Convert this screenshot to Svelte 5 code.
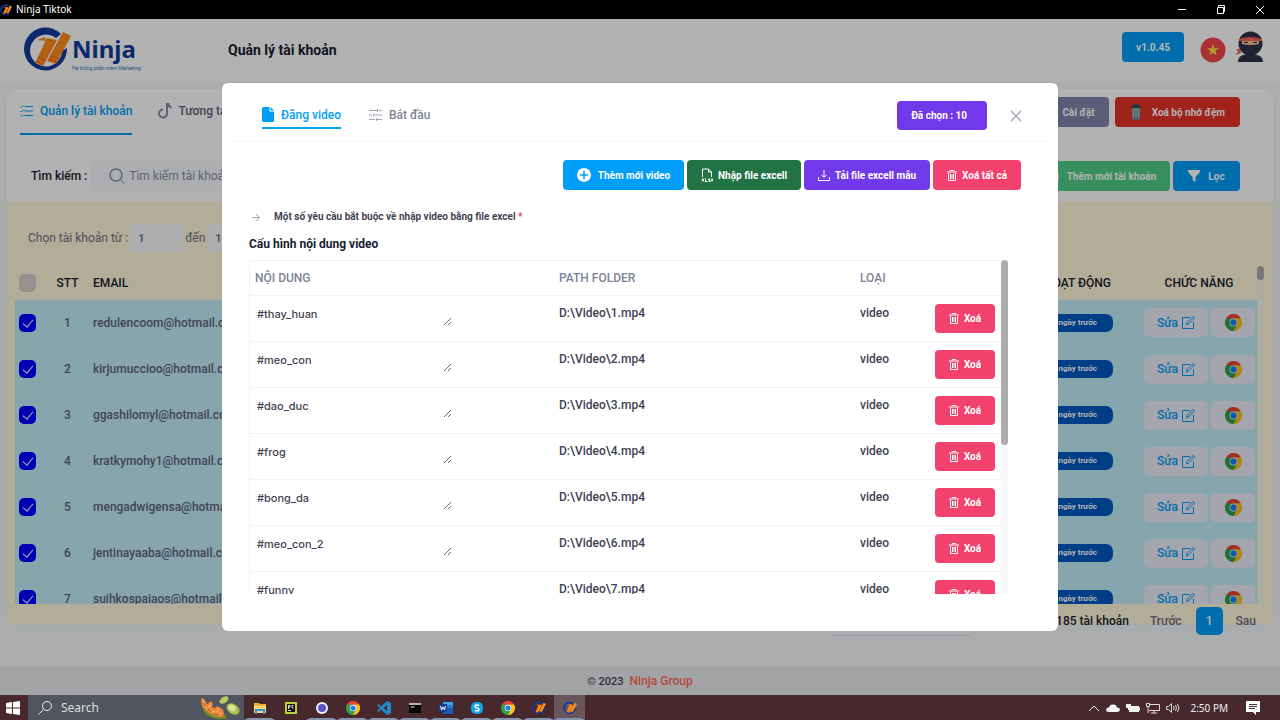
<script>
    let email = $state("");
    let fromAccount = $state("1");
    let toAccount = $state("10");
    let allSelected = $state(false);

    let accounts = $state([
        {email: "redulencoom@hotmail.com", checked: true},
        {email: "kirjumuccioo@hotmail.com", checked: true},
        {email: "ggashilomyl@hotmail.com", checked: true},
        {email: "kratkymohy1@hotmail.com", checked: true},
        {email: "mengadwigensa@hotmail.com", checked: true},
        {email: "jentinayaaba@hotmail.com", checked: true},
        {email: "suihkospaiaos@hotmail.com", checked: true},
    ]);

    let videos = $state([
        {content: "#thay_huan", path: "D:\\Video\\1.mp4"},
        {content: "#meo_con", path: "D:\\Video\\2.mp4"},
        {content: "#dao_duc", path: "D:\\Video\\3.mp4"},
        {content: "#frog", path: "D:\\Video\\4.mp4"},
        {content: "#bong_da", path: "D:\\Video\\5.mp4"},
        {content: "#meo_con_2", path: "D:\\Video\\6.mp4"},
        {content: "#funny", path: "D:\\Video\\7.mp4"},
    ]);

    const apps = [
        {name: "explorer", running: true},
        {name: "pycharm", running: false},
        {name: "browser", running: true},
        {name: "chrome", running: true},
        {name: "vscode", running: true},
        {name: "terminal", running: true},
        {name: "word", running: true},
        {name: "skype", running: true},
        {name: "chrome", running: true},
        {name: "ninja", running: true},
        {name: "ninja", running: true, active: true},
    ];

    function removeVideo(index) {
        videos.splice(index, 1);
    }

    function removeAll() {
        videos = [];
    }

    function toggleAll() {
        accounts.forEach((account) => (account.checked = allSelected));
    }
</script>

{#snippet ninjaMark(size)}
    <svg width={size} height={size} viewBox="0 0 48 44" aria-hidden="true">
        <path d="M38 6A21.500 21.500 0 1 0 44 20L39 23A16 16 0 1 1 33 10Z" fill="#123a9c" />
        <path d="M24 10 34 12 20 38 12 35Z" fill="#ff8c1a" />
        <path d="M40 4 48 8 33 36 24 33Z" fill="#ff8c1a" />
        <path d="M14 12l8-3 1 4z" fill="#ff8c1a" />
        <path d="M14 33l7 3M16 30l7 3M26 31l8 3M28 28l8 3" stroke="#e8402a" stroke-dasharray="1 1" />
    </svg>
{/snippet}

{#snippet chrome(size)}
    <svg width={size} height={size} viewBox="0 0 48 48" aria-hidden="true">
        <path d="M24 24 3.200 12A24 24 0 0 1 44.800 12Z" fill="#ea4335" />
        <path d="M24 24 44.800 12A24 24 0 0 1 24 48Z" fill="#fbc116" />
        <path d="M24 24 24 48A24 24 0 0 1 3.200 12Z" fill="#34a049" />
        <path d="M24 12H44.800L34 30Z" fill="#fbc116" />
        <path d="M34 30 24 48 14 30Z" fill="#34a049" />
        <path d="M3.200 12 14 30 24 12Z" fill="#34a049" />
        <path d="M3.200 12H44.800L24 13Z" fill="#ea4335" />
        <circle cx="24" cy="24" r="11" fill="#fff" />
        <circle cx="24" cy="24" r="9" fill="#1a82f0" />
    </svg>
{/snippet}

{#snippet trash()}
    <svg width="10" height="11" viewBox="0 0 10 11" aria-hidden="true">
        <path d="M3 1.500V.5h4v1M0 2h10M1.500 3v7.500h7V3M3.500 4v5M5 4v5M6.500 4v5" fill="none" stroke="#fff" />
    </svg>
{/snippet}

<div class="window">
    <header class="titlebar">
        {@render ninjaMark(12)}
        <span class="title">Ninja Tiktok</span>
        <button aria-label="Minimize"><svg width="10" height="10"><path d="M1 4.500h8" stroke="#fff" /></svg></button>
        <button aria-label="Restore"><svg width="10" height="10"><path d="M1.500 2.500h6v6h-6zM2.500 2V.5h6v6H8" fill="none" stroke="#fff" /></svg></button>
        <button aria-label="Close"><svg width="10" height="10"><path d="M1 1l8 8M9 1l-8 8" stroke="#fff" /></svg></button>
    </header>

    <div class="screen">
        <div class="page">
            <div class="header">
                <div class="logo">
                    {@render ninjaMark(48)}
                    <div class="logo-text">
                        <b>Ninja</b>
                        <small>Hệ thống phần mềm Marketing</small>
                    </div>
                </div>
                <h1>Quản lý tài khoản</h1>
                <button class="btn blue version">v1.0.45</button>
                <svg class="flag" width="26" height="26" viewBox="0 0 26 26" aria-label="Tiếng Việt">
                    <circle cx="13" cy="13" r="12.500" fill="#f2464b" />
                    <path d="M13 7l1.500 4.300h4.500l-3.600 2.700 1.300 4.500-3.700-2.700-3.700 2.700 1.300-4.500L7 11.300h4.500z" fill="#ffd93b" />
                </svg>
                <svg class="avatar" width="28" height="32" viewBox="0 0 28 32" aria-label="Avatar">
                    <path d="M2 31c0-6 5-8 12-8s13 2 13 8z" fill="#2f3148" />
                    <ellipse cx="14.500" cy="12.500" rx="12" ry="12" fill="#2f3148" />
                    <path d="M3 8q11-4 23 0v2H3z" fill="#ef6450" />
                    <path d="M6 10h17v3q-8 2-17 0z" fill="#f5c5a3" />
                    <path d="M8 11.500h4M17 11.500h4" stroke="#222" />
                    <path d="M4 17l-4 2 2 1-2 4 5-2z" fill="#ef6450" />
                </svg>
            </div>

            <div class="content">
                <section class="card">
                    <div class="tabs-row">
                        <button class="tab active">
                            <svg width="14" height="12" viewBox="0 0 14 12"><path d="M4.500 1.500H13M4.500 6H13M4.500 10.500H13M.5 1.500l1 1 2-2M.5 6l1 1 2-2M.5 10.500l1 1 2-2" fill="none" stroke="#009ef7" /></svg>
                            Quản lý tài khoản
                        </button>
                        <button class="tab">
                            <svg width="14" height="16" viewBox="0 0 14 16"><path d="M5 6.500A4 4 0 1 0 9 11V1h1.500q.5 3 3 3.500" fill="none" stroke="#8a8fa5" stroke-width="2" /></svg>
                            Tương tác
                        </button>
                        <div class="spacer"></div>
                        <button class="btn slate">Cài đặt</button>
                        <button class="btn red">
                            <svg width="12" height="16" viewBox="0 0 12 16"><path d="M1.500 4h9l-.5 11.500H2z" fill="#6f8c99" /><path d="M3.500 5.500v8M6 5.500v8M8.500 5.500v8" stroke="#b7ccd2" /><path d="M1 3h10M4 1h4" stroke="#39505c" stroke-width="2" /><path d="M3 5h6" stroke="#7bd08a" /></svg>
                            Xoá bộ nhớ đệm
                        </button>
                    </div>

                    <div class="search-row">
                        <label for="search">Tìm kiếm :</label>
                        <div class="search-box">
                            <svg width="16" height="16" viewBox="0 0 16 16"><circle cx="7" cy="7" r="6" fill="none" stroke="#8a8fa5" stroke-width="1.500" /><path d="M11.500 11.500l4 4" stroke="#b4b8c8" stroke-width="1.500" /></svg>
                            <input id="search" placeholder="Tìm kiếm tài khoản" bind:value={email} />
                        </div>
                        <div class="spacer"></div>
                        <button class="btn green">
                            <svg width="14" height="14" viewBox="0 0 14 14"><circle cx="7" cy="7" r="7" fill="#fff" /><path d="M3 7h8M7 3v8" stroke="#50cd89" stroke-width="2" /></svg>
                            Thêm mới tài khoản
                        </button>
                        <button class="btn blue filter">
                            <svg width="12" height="12" viewBox="0 0 12 12"><path d="M0 0h12v2L7.500 7v5l-3-2V7L0 2z" fill="#fff" /></svg>
                            Lọc
                        </button>
                    </div>

                    <div class="accounts">
                        <div class="range">
                            <label for="from">Chọn tài khoản từ :</label>
                            <input id="from" bind:value={fromAccount} />
                            <label for="to">đến</label>
                            <input id="to" bind:value={toAccount} />
                        </div>
                        <div class="scroll-area">
                            <div class="scroller">
                                <table class="account-table">
                                    <thead>
                                        <tr>
                                            <th class="col-check"><input type="checkbox" aria-label="Chọn tất cả" bind:checked={allSelected} onchange={toggleAll} /></th>
                                            <th class="col-stt">STT</th>
                                            <th>EMAIL</th>
                                            <th class="col-active">HOẠT ĐỘNG</th>
                                            <th class="col-action">CHỨC NĂNG</th>
                                        </tr>
                                    </thead>
                                    <tbody>
                                        {#each accounts as account, i}
                                            <tr>
                                                <td class="col-check"><input type="checkbox" aria-label={account.email} bind:checked={account.checked} /></td>
                                                <td class="col-stt">{i + 1}</td>
                                                <td>{account.email}</td>
                                                <td class="col-active"><span class="badge">ngày trước</span></td>
                                                <td class="col-action">
                                                    <div class="actions">
                                                        <button class="edit">
                                                            Sửa
                                                            <svg width="13" height="13" viewBox="0 0 13 13"><path d="M8 1.500H.5v11h11V6M4.500 9l.5-2.500L11 .5 12.500 2l-6 6z" fill="none" stroke="#009ef7" /></svg>
                                                        </button>
                                                        <button class="launch" aria-label="Mở Chrome">{@render chrome(17)}</button>
                                                    </div>
                                                </td>
                                            </tr>
                                        {/each}
                                    </tbody>
                                </table>
                            </div>
                            <div class="track"><div class="thumb small"></div></div>
                        </div>
                    </div>
                </section>

                <nav class="pagination">
                    <select aria-label="Số dòng"><option></option></select>
                    <b>185 tài khoản</b>
                    <button>Trước</button>
                    <button class="current">1</button>
                    <button>Sau</button>
                </nav>
            </div>

            <footer>
                <b>© 2023</b>
                <a href="#ninja">Ninja Group</a>
            </footer>
        </div>

        <div class="overlay">
            <div class="modal" role="dialog" aria-label="Đăng video">
                <div class="modal-header">
                    <button class="modal-tab active">
                        <svg width="12" height="15" viewBox="0 0 12 15"><path d="M1.500 0H7.500v4.500H12v9Q12 15 10.500 15h-9Q0 15 0 13.500v-12Q0 0 1.500 0z" fill="#009ef7" /><path d="M8.500 0L12 3.500H8.500z" fill="#009ef7" /></svg>
                        Đăng video
                    </button>
                    <button class="modal-tab">
                        <svg width="13" height="12" viewBox="0 0 13 12"><path d="M0 1.500h8M10 1.500h3M0 6h3M5 6h8M0 10.500h6M8 10.500h5M8.500 0v3M4.500 4.500v3M7.500 9v3" fill="none" stroke="#a1a5b7" /></svg>
                        Bắt đầu
                    </button>
                    <div class="spacer"></div>
                    <button class="btn purple chosen">Đã chọn : 10</button>
                    <button class="close" aria-label="Đóng"><svg width="12" height="12"><path d="M1 1l10 10M11 1L1 11" stroke="#a8abb5" stroke-width="1.500" /></svg></button>
                </div>

                <div class="modal-body">
                    <div class="toolbar">
                        <button class="btn blue add">
                            <svg width="14" height="14" viewBox="0 0 14 14"><circle cx="7" cy="7" r="7" fill="#fff" /><path d="M3 7h8M7 3v8" stroke="#009ef7" stroke-width="1.500" /></svg>
                            Thêm mới video
                        </button>
                        <button class="btn excel">
                            <svg width="12" height="14" viewBox="0 0 12 14"><path d="M1.500 9V1h6l3 3v5M7.500 1v3h3" fill="none" stroke="#fff" /><path d="M1 10.500l2 3M3 10.500l-2 3M4.500 10.500v3h2M9 11H7.500v1H9v1.500H7.500M10 10.500l2 3M12 10.500l-2 3" fill="none" stroke="#fff" /></svg>
                            Nhập file excell
                        </button>
                        <button class="btn purple">
                            <svg width="12" height="11" viewBox="0 0 12 11"><path d="M.5 7v3.500h11V7M6 0v7M3.500 5L6 7.500 8.500 5" fill="none" stroke="#fff" /></svg>
                            Tải file excell mẫu
                        </button>
                        <button class="btn pink" onclick={removeAll}>{@render trash()} Xoá tất cả</button>
                    </div>

                    <p class="rules">
                        <svg width="8" height="9" viewBox="0 0 8 9"><path d="M0 4.500h7M4 1l3.500 3.500L4 8" fill="none" stroke="#a1a5b7" /></svg>
                        <span>Một số yêu cầu bắt buộc về nhập video bằng file excel <i>*</i></span>
                    </p>
                    <h2>Cấu hình nội dung video</h2>

                    <div class="scroll-area videos">
                        <div class="scroller">
                            <table class="video-table">
                                <thead>
                                    <tr>
                                        <th>NỘI DUNG</th>
                                        <th>PATH FOLDER</th>
                                        <th class="col-type">LOẠI</th>
                                        <th class="col-delete"></th>
                                    </tr>
                                </thead>
                                <tbody>
                                    {#each videos as video, i}
                                        <tr>
                                            <td><textarea aria-label="Nội dung {i + 1}" rows="1" bind:value={video.content}></textarea></td>
                                            <td>{video.path}</td>
                                            <td>video</td>
                                            <td><button class="btn pink delete" onclick={() => removeVideo(i)}>{@render trash()} Xoá</button></td>
                                        </tr>
                                    {/each}
                                </tbody>
                            </table>
                        </div>
                        <div class="track"><div class="thumb"></div></div>
                    </div>
                </div>
            </div>
        </div>
    </div>

    <div class="taskbar">
        <button class="start" aria-label="Start"><svg width="14" height="14" viewBox="0 0 14 14"><path d="M0 2l6-1v5.500H0zM7 .9L14 0v6.500H7zM0 7.500h6V13l-6-1zM7 7.500h7V14l-7-.9z" fill="#fff" /></svg></button>
        <button class="task-search">
            <svg width="14" height="14" viewBox="0 0 14 14"><circle cx="9" cy="5" r="4.500" fill="none" stroke="#eee" /><path d="M5.500 8.500L.5 13.500" stroke="#eee" /></svg>
            <span>Search</span>
            <svg width="42" height="23" viewBox="0 0 42 23" aria-hidden="true">
                <path d="M2 8q3 12 12 14 9 2 14 0l-2-4q-12 0-19-9z" fill="#708d25" />
                <path d="M2 3q2-2 4 1 1 4 3 4 1-3 4-2 2 2 0 5l3 1q2-3 4-1 5 2 5 7l-2 3q-7 0-13-4-8-5-8-14z" fill="#e9873d" />
                <path d="M4 5l2 2M6 10l2 2M11 9l-1 3M13 15l3 1M19 13l-1 4M21 17l2 1" stroke="#ffc27e" />
                <path d="M9 13l3 3M16 18l3 1M5 7l1 3" stroke="#b44d20" />
                <ellipse cx="25" cy="4" rx="5" ry="3" transform="rotate(-35 25 4)" fill="#bccb62" />
                <ellipse cx="34" cy="13" rx="7" ry="5" transform="rotate(35 34 13)" fill="#aebd4c" />
                <ellipse cx="33" cy="12" rx="4" ry="3" transform="rotate(35 33 12)" fill="#dbe39a" />
            </svg>
        </button>
        {#each apps as app}
            <button class="app" class:running={app.running} class:active={app.active} aria-label={app.name}>
                {#if app.name === "chrome"}
                    {@render chrome(14)}
                {:else if app.name === "ninja"}
                    {@render ninjaMark(14)}
                {:else}
                    <svg width="14" height="14" viewBox="0 0 14 14">
                        {#if app.name === "explorer"}
                            <path d="M1 2h5l1 1h6v9H1z" fill="#f3b23a" />
                            <path d="M1 5h12v7H1z" fill="#ffd76a" />
                            <path d="M2 13V8h10v5h-2v-3H4v3z" fill="#3292dc" />
                        {:else if app.name === "pycharm"}
                            <path d="M1 1h12v12H1z" fill="#b9cf3c" />
                            <path d="M3 3h8v8H3z" fill="#111" />
                            <path d="M4.500 8V4.500H6V6H4.500M9.500 4.500H8v2.500h1.500M4 9.500h3" fill="none" stroke="#ddd" />
                        {:else if app.name === "browser"}
                            <circle cx="7" cy="7" r="6" fill="#f2f2fb" />
                            <circle cx="7" cy="7" r="4" fill="#5a54bd" />
                        {:else if app.name === "vscode"}
                            <path d="M10 0l4 2v10l-4 2-6-5.500L1.500 11 0 10l3-3-3-3 1.500-1L4 5.500zM10 4L6.500 7 10 10z" fill="#2489ca" />
                        {:else if app.name === "terminal"}
                            <path d="M1 2h12v10H1z" fill="#050505" />
                            <path d="M1 2h12v2H1z" fill="#b5b5b5" />
                            <path d="M2.500 6h4" stroke="#ddd" />
                        {:else if app.name === "word"}
                            <path d="M4 1h10v12H4z" fill="#41a5ee" />
                            <path d="M4 4h10v3H4z" fill="#2b7cd3" />
                            <path d="M4 7h10v6H4z" fill="#185abd" />
                            <path d="M0 3h8v8H0z" fill="#103f91" />
                            <path d="M1.500 5l1 4L4 6l1.500 3 1-4" fill="none" stroke="#fff" />
                        {:else}
                            <rect x="1" y="1" width="12" height="12" rx="5" fill="#12a5e9" />
                            <path d="M9 5Q8.500 4 7 4 5 4 5 5.500 5 6.500 7 7q2 .5 2 1.500Q9 10 7 10 5.500 10 5 9" fill="none" stroke="#fff" stroke-width="1.500" />
                        {/if}
                    </svg>
                {/if}
            </button>
        {/each}
        <div class="spacer"></div>
        <div class="tray">
            <svg width="12" height="12"><path d="M1 9l5-5 5 5" fill="none" stroke="#eee" /></svg>
            <svg width="14" height="12"><path d="M3 10Q0 10 0 7.500 1 5 3 5.500 4 2 7 2.500 10 2 11 5.500 14 5.500 14 8 13.500 10 11 10z" fill="#f2f2f2" /></svg>
            <svg width="14" height="12"><path d="M3 4h10v6H3zM13 5.500h1v3h-1z" fill="#f2f2f2" /><path d="M0 2h5v4H3v2H2V6H0z" fill="#f2f2f2" /></svg>
            <svg width="14" height="12"><path d="M4 2.500h9.500v6H3M5 11h6M8 9v2M.5 1.500h3v3h-3zM2 5v6" fill="none" stroke="#ddd" /></svg>
            <svg width="14" height="12"><path d="M.5 4.500h2l3-3v9l-3-3h-2zM7.500 4q1.500 2 0 4M9.500 3q2 3 0 6M11.500 2q3 4 0 8" fill="none" stroke="#ddd" /></svg>
        </div>
        <time>2:50 PM</time>
        <svg class="notes" width="14" height="14" viewBox="0 0 14 14"><path d="M0 0h14v11h-4v3l-3-3H0z" fill="#fff" /><path d="M3 3.500h8M3 5.500h8M3 7.500h6" stroke="#46282d" /></svg>
    </div>
</div>

<style>
    :global(body) {
        background: #000;
    }

    .window {
        display: flex;
        flex-direction: column;
        height: 100vh;
        font-family: Roboto, "Liberation Sans", sans-serif;
        font-size: 12px;
        color: #3f4254;
    }

    .window * {
        box-sizing: border-box;
    }

    svg {
        flex: none;
    }

    button {
        font: inherit;
        color: inherit;
        background: none;
        border: none;
        padding: 0;
        cursor: pointer;
        white-space: nowrap;
    }

    input, select, textarea {
        font: inherit;
        color: inherit;
        border: none;
        outline: none;
    }

    table {
        width: 100%;
        border-collapse: collapse;
        table-layout: fixed;
    }

    .spacer {
        flex: 1;
    }

    /* title bar */
    .titlebar {
        display: flex;
        align-items: center;
        height: 19px;
        background: #000;
        color: #fff;
        font-family: "Noto Sans", sans-serif;
        font-size: 10px;
        padding-right: 1px;
    }

    .title {
        flex: 1;
        margin-left: 4px;
        line-height: 14px;
        padding-bottom: 2px;
    }

    .titlebar button {
        width: 39px;
        height: 19px;
    }

    .titlebar button svg {
        display: block;
        margin: 0 auto;
    }

    .screen {
        flex: 1;
        min-height: 0;
        position: relative;
        overflow: hidden;
    }

    .page {
        height: 100%;
        display: flex;
        flex-direction: column;
        background: #f5f8fa;
    }

    .header {
        display: flex;
        align-items: center;
        height: 62px;
        padding: 0 16px 0 23px;
        background: #fff;
    }

    .logo {
        display: flex;
        align-items: center;
        gap: 1px;
        width: 205px;
    }

    .logo-text {
        display: flex;
        flex-direction: column;
        color: #123a9c;
        padding-top: 4px;
    }

    .logo-text b {
        font-family: "Noto Sans", sans-serif;
        font-size: 24px;
        line-height: 32px;
    }

    .logo-text small {
        font-size: 5px;
        line-height: 6px;
        color: #3a78c2;
    }

    h1 {
        flex: 1;
        margin: 0;
        font-size: 14px;
        font-weight: 700;
        color: #181c32;
    }

    .btn {
        display: flex;
        align-items: center;
        justify-content: center;
        gap: 8px;
        height: 30px;
        border-radius: 4px;
        padding: 0 14px;
        color: #fff;
        font-size: 10px;
        font-weight: 700;
    }

    .blue {
        background: #009ef7;
    }

    .slate {
        background: #8186ab;
    }

    .red {
        background: #e53127;
        gap: 10px;
        padding: 0 15px;
    }

    .green {
        background: #50cd89;
    }

    .purple {
        background: #7239ea;
    }

    .pink {
        background: #f1416c;
    }

    .excel {
        background: #217346;
    }

    .filter {
        width: 67px;
    }

    .version {
        width: 62px;
        margin-bottom: 6px;
    }

    .flag {
        margin: 0 10px 0 16px;
    }

    .avatar {
        margin-bottom: 6px;
    }

    .content {
        flex: 1;
        min-height: 0;
        display: flex;
        flex-direction: column;
        padding: 8px 7px 32px;
    }

    .card {
        flex: 1;
        min-height: 0;
        display: flex;
        flex-direction: column;
        background: #fff;
        border-radius: 8px;
        box-shadow: 0 0 8px #eef1f4;
    }

    .tabs-row {
        display: flex;
        align-items: center;
        gap: 6px;
        height: 46px;
        padding: 0 33px 0 13px;
    }

    .tab {
        display: flex;
        align-items: center;
        gap: 6px;
        height: 46px;
        margin-right: 20px;
        border-bottom: 2px solid transparent;
        font-weight: 500;
        color: #5e6278;
    }

    .tab.active {
        color: #009ef7;
        border-color: #009ef7;
    }

    .search-row {
        display: flex;
        align-items: center;
        gap: 3px;
        padding: 24px 33px 9px 24px;
    }

    .search-row label {
        font-weight: 500;
        color: #181c32;
    }

    .search-box {
        display: flex;
        align-items: center;
        gap: 4px;
        width: 270px;
        height: 34px;
        margin-left: 1px;
        padding-left: 18px;
        border-radius: 5px;
        background: #f5f8fa;
    }

    .search-box input {
        flex: 1;
        min-width: 0;
        padding: 0;
        background: none;
    }

    .search-box input::placeholder {
        color: #8a8fa5;
    }

    .accounts {
        flex: 1;
        min-height: 0;
        display: flex;
        flex-direction: column;
        gap: 14px;
        padding: 22px 9px 20px 8px;
        background: #fff8dc;
    }

    .range {
        display: flex;
        align-items: center;
        gap: 2px;
        padding-left: 13px;
        color: #6d7085;
    }

    .range input {
        width: 53px;
        height: 28px;
        padding: 0 8px;
        border-radius: 5px;
        background: #f5f8fa;
        font-size: 11px;
        font-weight: 500;
        color: #5e6278;
    }

    .scroll-area {
        flex: 1;
        min-height: 0;
        display: flex;
    }

    .scroller {
        flex: 1;
        min-width: 0;
        overflow: hidden;
    }

    .track {
        width: 7px;
        background: rgba(240, 240, 244, 0.4);
    }

    .thumb {
        height: 185px;
        border-radius: 4px;
        background: #adadad;
    }

    .thumb.small {
        height: 14px;
    }

    .account-table th {
        height: 34px;
        padding: 0;
        text-align: left;
        font-weight: 500;
        color: #181c32;
    }

    .account-table td {
        height: 46px;
        padding: 0;
        border-bottom: 1px dashed #d3e5ea;
        font-weight: 500;
        color: #5e6278;
    }

    .account-table tbody tr {
        background: #c1edf7;
    }

    .account-table .col-check {
        width: 32px;
        padding-left: 4px;
    }

    .account-table .col-stt {
        width: 46px;
        padding-right: 5px;
        text-align: center;
    }

    .account-table .col-active {
        width: 150px;
        padding-right: 18px;
        text-align: right;
    }

    .account-table .col-action {
        width: 128px;
        text-align: center;
    }

    .account-table th.col-action {
        padding-left: 12px;
    }

    input[type="checkbox"] {
        display: grid;
        place-items: center;
        appearance: none;
        width: 17px;
        height: 18px;
        margin: 0;
        border-radius: 5px;
        background: #d6d0c9;
    }

    input[type="checkbox"]:checked {
        background: #00f;
    }

    input[type="checkbox"]:checked::before {
        content: "";
        width: 5px;
        height: 9px;
        margin-bottom: 2px;
        border: solid #fff;
        border-width: 0 1px 1px 0;
        transform: rotate(40deg);
    }

    .badge {
        display: inline-block;
        width: 110px;
        height: 18px;
        margin-right: -2px;
        padding-right: 16px;
        border-radius: 7px;
        background: #0059c2;
        color: #fff;
        font-size: 8px;
        font-weight: 700;
        line-height: 18px;
    }

    .actions {
        display: flex;
        gap: 3px;
        padding-left: 15px;
    }

    .edit, .launch {
        display: flex;
        align-items: center;
        justify-content: center;
        gap: 4px;
        height: 29px;
        border-radius: 5px;
        background: #ebecf8;
    }

    .edit {
        width: 64px;
        color: #009ef7;
    }

    .launch {
        width: 44px;
    }

    .pagination {
        display: flex;
        align-items: center;
        justify-content: flex-end;
        height: 28px;
        margin-top: -17px;
        padding-right: 17px;
        color: #6d7085;
        font-weight: 500;
    }

    .pagination select {
        width: 147px;
        height: 30px;
        margin-right: 82px;
        border: 1px solid #e4e6ef;
        border-radius: 5px;
        background: #f5f8fa;
    }

    .pagination b {
        margin-right: 21px;
        font-weight: 500;
        color: #181c32;
    }

    .pagination .current {
        width: 27px;
        height: 28px;
        margin: 0 13px 0 14px;
        border-radius: 5px;
        background: #009ef7;
        color: #fff;
    }

    footer {
        display: flex;
        align-items: center;
        justify-content: center;
        gap: 6px;
        height: 28px;
        background: #e9eaec;
    }

    footer b {
        font-size: 11px;
        font-weight: 500;
    }

    footer a {
        color: #ff6b57;
        font-weight: 500;
        text-decoration: none;
    }

    /* video dialog */
    .overlay {
        position: absolute;
        inset: 0;
        display: flex;
        justify-content: center;
        padding: 64px 24px;
        background: rgba(0, 0, 0, 0.3);
    }

    .modal {
        flex: 1;
        max-width: 836px;
        display: flex;
        flex-direction: column;
        border-radius: 6px;
        background: #fff;
    }

    .modal-header {
        display: flex;
        align-items: center;
        height: 59px;
        margin: 0 8px;
        padding: 7px 28px 0 32px;
        border-bottom: 1px solid #f5f6f9;
    }

    .modal-tab {
        display: flex;
        align-items: center;
        gap: 7px;
        height: 27px;
        margin-right: 28px;
        border-bottom: 2px solid transparent;
        font-weight: 500;
        color: #7e8299;
    }

    .modal-tab.active {
        color: #009ef7;
        border-color: #009ef7;
    }

    .chosen {
        height: 29px;
        padding: 0 20px 0 14px;
    }

    .close {
        margin-left: 23px;
        height: 12px;
    }

    .close svg {
        display: block;
    }

    .modal-body {
        flex: 1;
        min-height: 0;
        display: flex;
        flex-direction: column;
        padding: 18px 37px 37px 27px;
    }

    .toolbar {
        display: flex;
        justify-content: flex-end;
        gap: 3px;
    }

    .toolbar .btn {
        gap: 5px;
    }

    .toolbar .add {
        gap: 7px;
    }

    .rules {
        display: flex;
        align-items: center;
        gap: 14px;
        margin: 20px 0 12px 3px;
        font-size: 10px;
        line-height: 14px;
        font-weight: 700;
    }

    .rules i {
        font-style: normal;
        color: #f1416c;
    }

    h2 {
        margin: 0 0 8px;
        font-size: 12px;
        line-height: 16px;
        font-weight: 700;
        color: #181c32;
    }

    .videos {
        margin-right: 13px;
    }

    .videos .scroller {
        border: solid #eff2f5;
        border-width: 1px 0 0 1px;
    }

    .video-table th {
        height: 34px;
        padding: 0 5px;
        text-align: left;
        font-weight: 500;
        color: #7e8299;
        border-bottom: 1px solid #eff2f5;
    }

    .video-table th:first-child {
        width: 304px;
    }

    .video-table .col-type {
        width: 74px;
    }

    .video-table .col-delete {
        width: 72px;
    }

    .video-table td {
        height: 46px;
        padding: 10px 5px 0;
        vertical-align: top;
        font-weight: 500;
        border-bottom: 1px solid #eff2f5;
    }

    .video-table td:first-child {
        padding: 5px 0 0 2px;
    }

    .video-table td:last-child {
        padding: 8px 6px 0;
    }

    textarea {
        display: block;
        width: 200px;
        height: 25px;
        padding: 5px;
        font-family: Inter, sans-serif;
        font-size: 11px;
        line-height: 16px;
        background: none;
        overflow: hidden;
        resize: vertical;
    }

    .delete {
        gap: 5px;
        width: 60px;
        height: 29px;
        padding: 0;
    }

    /* taskbar */
    .taskbar {
        display: flex;
        align-items: stretch;
        height: 25px;
        background: #46282d;
        color: #f2f2f2;
        font-family: "Noto Sans", sans-serif;
    }

    .start {
        width: 28px;
        padding-right: 2px;
    }

    .start svg {
        display: block;
        margin: 0 auto;
    }

    .task-search {
        display: flex;
        align-items: center;
        width: 216px;
        padding: 0 3px 0 10px;
        background: #50555f;
        font-size: 12px;
        text-align: left;
    }

    .task-search span {
        flex: 1;
        margin-left: 9px;
        color: #ddd;
    }

    .app {
        width: 31px;
        border: solid transparent;
        border-width: 0 4px 2px;
        background-clip: padding-box;
    }

    .app svg {
        display: block;
        margin: 3px auto 0;
    }

    .app.running {
        border-bottom-color: #8794ae;
    }

    .app.active {
        background: #69565c;
        background-clip: border-box;
    }

    .tray {
        display: flex;
        align-items: center;
        gap: 6px;
    }

    time {
        align-self: center;
        margin: 0 18px 0 10px;
        font-size: 10px;
    }

    .notes {
        align-self: center;
        margin-right: 20px;
    }
</style>
